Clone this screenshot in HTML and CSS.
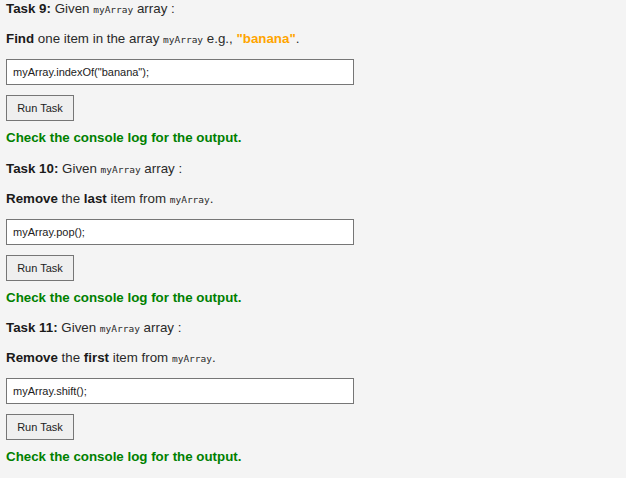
FILE: index.html
```html
<!DOCTYPE html>
<html>
<head>
<meta charset="utf-8">
<link rel="stylesheet" href="styles.css">
</head>
<body>
<div class="page">
  <div class="task">
    <p class="title"><b>Task 9:</b> Given <code>myArray</code> array :</p>
    <p class="desc"><b>Find</b> one item in the array <code>myArray</code> e.g., <b class="orange">"banana"</b>.</p>
    <input class="field" type="text" value='myArray.indexOf("banana");'>
    <button class="run">Run Task</button>
    <p class="note">Check the console log for the output.</p>
  </div>
  <div class="task">
    <p class="title"><b>Task 10:</b> Given <code>myArray</code> array :</p>
    <p class="desc"><b>Remove</b> the <b>last</b> item from <code>myArray</code>.</p>
    <input class="field" type="text" value="myArray.pop();">
    <button class="run">Run Task</button>
    <p class="note">Check the console log for the output.</p>
  </div>
  <div class="task">
    <p class="title"><b>Task 11:</b> Given <code>myArray</code> array :</p>
    <p class="desc"><b>Remove</b> the <b>first</b> item from <code>myArray</code>.</p>
    <input class="field" type="text" value="myArray.shift();">
    <button class="run">Run Task</button>
    <p class="note">Check the console log for the output.</p>
  </div>
</div>
</body>
</html>
```
FILE: styles.css
```css
html, body {
  margin: 0;
  padding: 0;
  background: #f4f4f4;
}
body {
  font-family: "Liberation Sans", Arial, sans-serif;
  font-size: 13.33px;
  line-height: 16px;
  color: #2a2a2a;
}
.page {
  padding: 1px 6px 0;
}
.task {
  display: flex;
  flex-direction: column;
  align-items: flex-start;
}
.title {
  margin: 0 0 14px;
}
.desc {
  margin: 0 0 12px;
}
b {
  color: #1a1a1a;
}
code {
  font-family: "DejaVu Sans Mono", monospace;
  font-size: 9.5px;
  line-height: 1;
}
.orange {
  color: #ffa500;
}
.field {
  box-sizing: border-box;
  width: 348px;
  height: 26px;
  margin: 0 0 10px;
  padding: 0 6px;
  border: 1px solid #767676;
  background: #fff;
  font-family: "Liberation Sans", Arial, sans-serif;
  font-size: 11px;
  color: #222;
  outline: none;
}
.run {
  box-sizing: border-box;
  height: 26px;
  width: 68px;
  margin: 0 0 9px;
  padding: 0;
  border: 1px solid #767676;
  border-radius: 0;
  background: #efefef;
  font-family: "Liberation Sans", Arial, sans-serif;
  font-size: 11px;
  color: #222;
}
.note {
  margin: 0 0 14.5px;
  color: #008000;
  font-weight: bold;
}
.note, .note b {
  color: #008000;
}
```
